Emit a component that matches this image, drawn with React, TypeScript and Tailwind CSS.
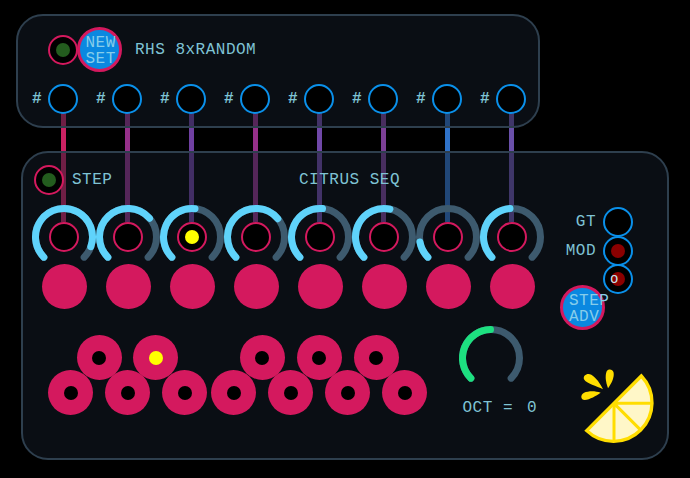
import React from 'react';

const labelClass = "text-[#7fc3d4] text-[16px] leading-none tracking-[0.5px] whitespace-pre font-['Liberation_Mono',monospace]";

const cableColors = ['bg-[#cb2263]', 'bg-[#96308a]', 'bg-[#7040a2]', 'bg-[#96308a]', 'bg-[#7048a8]', 'bg-[#7c4096]', 'bg-[#2f72c8]', 'bg-[#6a50aa]'];
const knobValues = [110, 49, 6, 50, 5, 12, -100, -4];

const polar = (angle: number, r: number) => {
  const rad = (angle * Math.PI) / 180;
  return [32 + r * Math.sin(rad), 32 - r * Math.cos(rad)];
};

const arc = (from: number, to: number, r = 28.5) => {
  const [x1, y1] = polar(from, r);
  const [x2, y2] = polar(to, r);
  const large = to - from > 180 ? 1 : 0;
  return `M${x1} ${y1}A${r} ${r} 0 ${large} 1 ${x2} ${y2}`;
};

const Ring = ({ value, color }: { value: number; color: string }) => (
  <svg width="64" height="64" viewBox="0 0 64 64" className="absolute left-0 top-0 overflow-visible">
    <path d={arc(-135, 135)} fill="none" stroke="#3d5a6e" strokeWidth="7" strokeLinecap="round" />
    <path d={arc(-135, value)} fill="none" stroke={color} strokeWidth="7" strokeLinecap="round" />
  </svg>
);

const Led = ({ color = 'bg-[#235c1e]' }: { color?: string }) => (
  <div className="w-[30px] h-[30px] shrink-0 rounded-full border-2 border-[#d4195e] bg-black flex items-center justify-center">
    <div className={`w-[14px] h-[14px] rounded-full ${color}`} />
  </div>
);

const Jack = ({ children }: { children?: React.ReactNode }) => (
  <div className="relative w-[30px] h-[30px] shrink-0 rounded-full border-2 border-[#0a90ea] bg-black flex items-center justify-center">
    {children}
  </div>
);

const PushButton = ({ top, bottom }: { top: string; bottom: string }) => (
  <div className="w-[45px] h-[45px] shrink-0 rounded-full border-[3px] border-[#d4195e] bg-[#0b88e0] pl-[6px] pt-[5px] text-[#86cdea] text-[16px] leading-[16px] tracking-[0.5px] font-['Liberation_Mono',monospace] whitespace-pre">
    <div>{top}</div>
    <div>{bottom}</div>
  </div>
);

const Pad = ({ lit }: { lit?: boolean }) => (
  <div className="w-[45px] h-[45px] shrink-0 rounded-full bg-[#d4195e] flex items-center justify-center">
    <div className={`w-[14px] h-[14px] rounded-full ${lit ? 'bg-[#ffff00]' : 'bg-black'}`} />
  </div>
);

const Lemon = () => (
  <svg width="95" height="90" viewBox="0 0 285 270" className="shrink-0">
    <path d="M214 48 A116 116 0 0 1 50 212 Z" fill="#fff7c8" stroke="#ffdd00" strokeWidth="10" strokeLinejoin="miter" />
    <path d="M132 130H245M132 130V245M132 130L213 211" fill="none" stroke="#ffdd00" strokeWidth="9" />
    <path d="M99 88C80 78 50 72 42 58C38 46 52 38 64 44C78 52 92 72 99 88Z" fill="#ffdd00" />
    <path d="M114 85C108 68 104 50 110 34C114 26 128 26 131 38C133 54 124 70 114 85Z" fill="#ffdd00" />
    <path d="M92 98C78 108 60 118 44 120C32 120 30 104 42 98C56 92 76 92 92 98Z" fill="#ffdd00" />
  </svg>
);

const App: React.FC = () => {
  return (
    <div className="relative w-[690px] h-[478px] bg-black overflow-hidden pt-[14px] pl-[16px]">
      {/* patch cables run under the translucent panels */}
      <div className="absolute left-[61px] top-[110px] flex gap-[59px]">
        {cableColors.map((c, i) => (
          <div key={i} className={`w-[5px] h-[112px] ${c}`} />
        ))}
      </div>

      <div className="relative w-[524px] h-[114px] rounded-[27px] border-2 border-[#2e3f4e] bg-[#141c28]/50">
        <div className="flex items-center pl-[30px] pt-[11px]">
          <Led />
          <div className="-ml-[1.5px]">
            <PushButton top="NEW" bottom="SET" />
          </div>
          <span className={`${labelClass} ml-[13.5px]`}>RHS 8xRANDOM</span>
        </div>
        <div className="flex gap-[4px] mt-[12px]">
          {cableColors.map((_, i) => (
            <div key={i} className="w-[60px] flex items-center justify-end gap-[6px]">
              <span className={`${labelClass} font-bold`}>#</span>
              <Jack />
            </div>
          ))}
        </div>
      </div>

      <div className="relative ml-[5px] mt-[23px] w-[648px] h-[309px] rounded-[27px] border-2 border-[#2e3f4e] bg-[#141c28]/50">
        <div className="flex items-center pl-[11px] pt-[12px]">
          <Led />
          <span className={`${labelClass} ml-[8px] w-[227px]`}>STEP</span>
          <span className={labelClass}>CITRUS SEQ</span>
        </div>

        <div className="flex pl-[9px] mt-[10px] h-[104px]">
          <div className="w-[512px]">
            <div className="flex">
              {knobValues.map((v, i) => (
                <div key={i} className="relative w-[64px] h-[59px] flex justify-center pt-[17px]">
                  <Ring value={v} color="#5fd3fb" />
                  <div className="relative w-[30px] h-[30px] rounded-full border-2 border-[#d4195e] bg-black flex items-center justify-center">
                    {i === 2 && <div className="w-[14px] h-[14px] rounded-full bg-[#ffff00]" />}
                  </div>
                </div>
              ))}
            </div>
            <div className="flex pl-[9.5px] gap-[19px]">
              {knobValues.map((_, i) => (
                <div key={i} className="w-[45px] h-[45px] rounded-full bg-[#d4195e]" />
              ))}
            </div>
          </div>

          <div className="w-[89px] pt-[2px]">
            <div className="flex items-center justify-end h-[29px] gap-[7px]">
              <span className={labelClass}>GT</span>
              <Jack />
            </div>
            <div className="flex items-center justify-end h-[29px] gap-[7px]">
              <span className={labelClass}>MOD</span>
              <Jack>
                <div className="w-[14px] h-[14px] rounded-full bg-[#8b0000]" />
              </Jack>
            </div>
            <div className="flex items-center justify-end h-[28px]">
              <Jack>
                <div className="w-[14px] h-[14px] rounded-full bg-[#8b0000]" />
                <span className="absolute left-[5px] top-[5px] text-[#c4e4ee] text-[14px] leading-[16px] font-['Liberation_Mono',monospace]">o</span>
              </Jack>
            </div>
            <div className="ml-[16px] -mt-[8px]">
              <PushButton top="STEP" bottom="ADV" />
            </div>
          </div>
        </div>

        <div className="flex items-start pl-[25px] mt-[26px]">
          <div className="w-[380px] shrink-0">
            <div className="flex pl-[28.5px]">
              <Pad />
              <div className="ml-[11.5px]"><Pad lit /></div>
              <div className="ml-[61.5px]"><Pad /></div>
              <div className="ml-[12px]"><Pad /></div>
              <div className="ml-[12px]"><Pad /></div>
            </div>
            <div className="flex -mt-[10px]">
              <Pad />
              <div className="ml-[12px]"><Pad /></div>
              <div className="ml-[12px]"><Pad /></div>
              <div className="ml-[4px]"><Pad /></div>
              <div className="ml-[12px]"><Pad /></div>
              <div className="ml-[12px]"><Pad /></div>
              <div className="ml-[12px]"><Pad /></div>
            </div>
          </div>
          <div className="ml-[30.5px] -mt-[9px] w-[80px] shrink-0">
            <div className="relative w-[64px] h-[64px]">
              <Ring value={-1} color="#1de080" />
            </div>
            <div className={`${labelClass} ml-[4px] mt-[10px]`}>OCT = <span className="ml-[4px]">0</span></div>
          </div>
          <div className="ml-[31.5px] mt-[25px]">
            <Lemon />
          </div>
        </div>
      </div>
    </div>
  );
};

export default App;
